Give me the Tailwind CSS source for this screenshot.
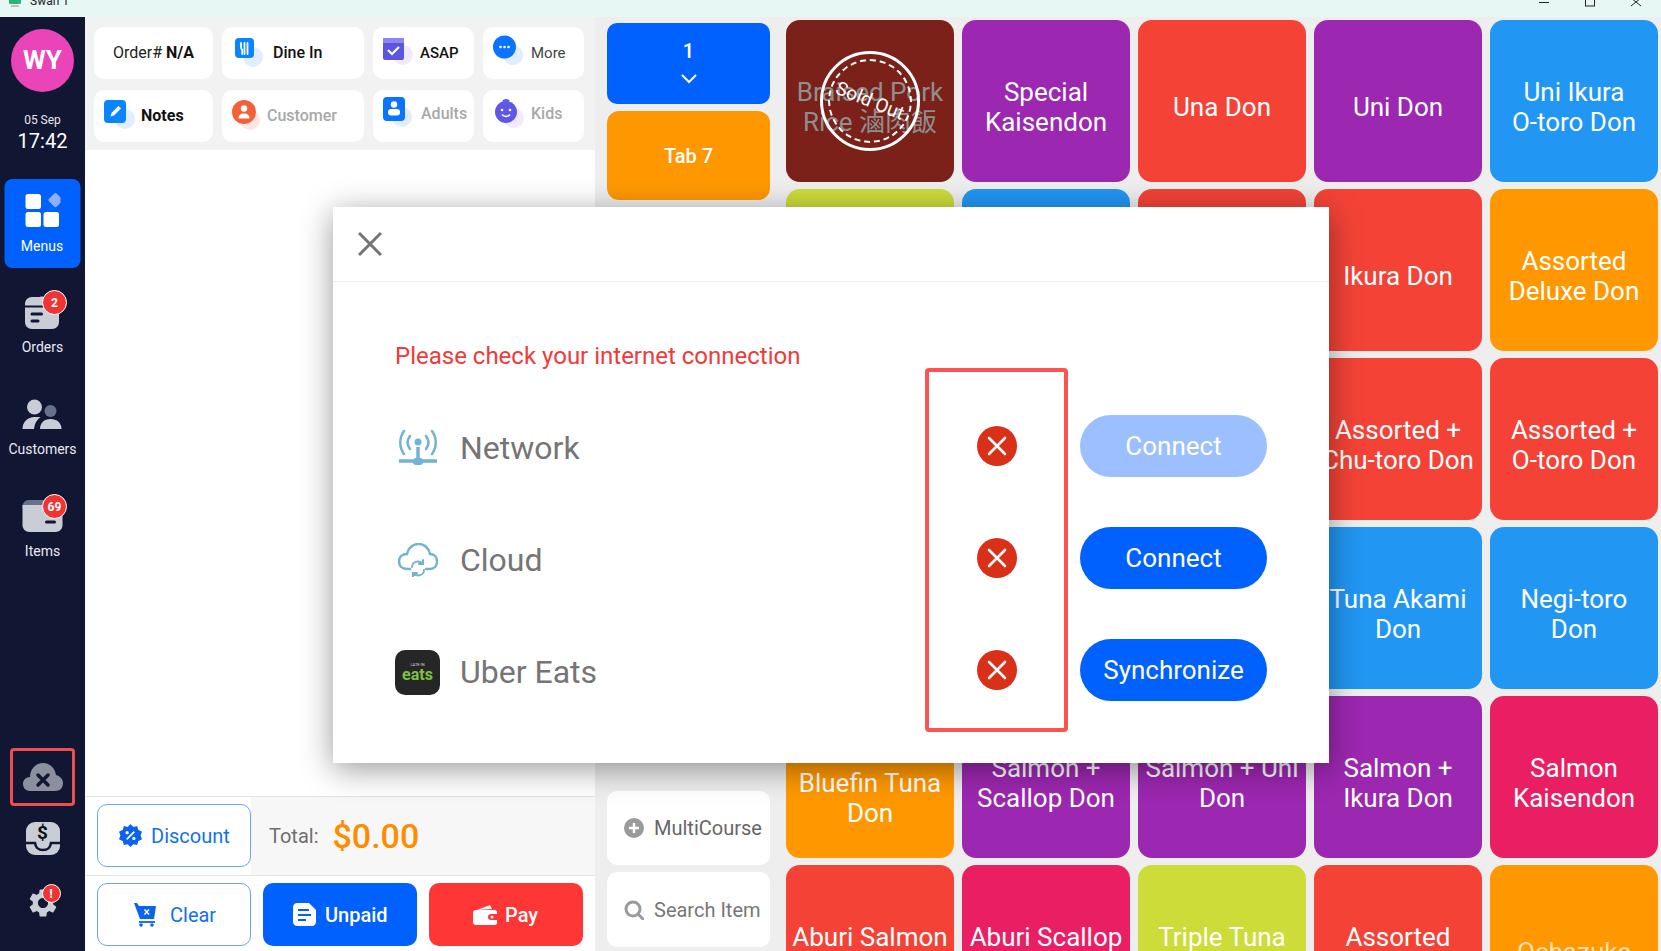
<!DOCTYPE html>
<html lang="en">
<head>
  <meta charset="UTF-8" />
  <title>Swan 1</title>
  <script src="https://cdn.jsdelivr.net/npm/@tailwindcss/browser@4"></script>
</head>
<body class="relative w-[1661px] h-[951px] overflow-hidden bg-white font-['Roboto','Noto_Sans_CJK_TC',sans-serif]">

  <!-- title bar, cut off at the top of the capture -->
  <div class="h-[17px] bg-[#e6f7f4] flex items-start justify-between overflow-hidden">
    <div class="flex items-center -mt-[6px] pl-[8px] gap-[8px]">
      <svg class="w-[14px] h-[14px]" viewBox="0 0 14 14"><rect x="1" y="1" width="12" height="9" rx="1" fill="#2fb37a"/><rect x="3" y="11" width="8" height="2" fill="#b8c4c0"/></svg>
      <span class="text-[12px] leading-[14px] text-[#222]">Swan 1</span>
    </div>
    <svg class="w-[112px] h-[8px] mr-[10px]" viewBox="0 0 112 8" fill="none" stroke="#222" stroke-width="1">
      <path d="M0 2.5H10"/><rect x="46.5" y="-4" width="9" height="10"/><path d="M92 -1L102 7M102 -1L92 7" transform="translate(0 -1)"/>
    </svg>
  </div>

  <div class="flex h-[934px]">
    <!-- sidebar -->
    <aside class="w-[85px] shrink-0 bg-[#111633] flex flex-col items-center">
      <div class="mt-[12px] w-[63px] h-[63px] rounded-full bg-[#ea44b8] flex items-center justify-center text-white font-bold text-[26px]">WY</div>
      <div class="mt-[20px] text-[12px] leading-[16px] text-[#e8e8e8]">05 Sep</div>
      <div class="text-[20px] leading-[26px] text-white">17:42</div>

      <div class="mt-[25px] w-[76px] h-[89px] -translate-x-[0.5px] rounded-[8px] bg-[#0061ff] flex flex-col items-center pt-[14px]">
        <svg class="w-[36px] h-[36px]" viewBox="0 0 36 36">
          <rect x="1" y="1" width="15.5" height="15" rx="2.5" fill="#fff"/>
          <rect x="24" y="1" width="11" height="11" rx="2" transform="rotate(45 29.5 8.5)" fill="#8cb0ff"/>
          <rect x="1" y="19" width="15.5" height="15" rx="2.5" fill="#fff"/>
          <rect x="19" y="19" width="15.5" height="15" rx="2.5" fill="#fff"/>
        </svg>
        <span class="mt-[7px] text-[14px] leading-[20px] text-white">Menus</span>
      </div>

      <div class="relative mt-[8px] h-[102px] w-[85px] flex flex-col items-center pt-[14px]">
        <svg class="w-[64px] h-[44px]" viewBox="0 0 64 44">
          <path d="M14 14c0-4 3-7 7-7h6c3 0 4-1 6 0h8c4 0 7 3 7 7v18c0 4-3 7-7 7H21c-4 0-7-3-7-7z" fill="#c9ced6"/>
          <path d="M14 16.500H48" stroke="#111633" stroke-width="2"/>
          <rect x="19.500" y="22.500" width="12.500" height="3" rx="1.500" fill="#111633"/>
          <rect x="19.500" y="29.500" width="9" height="3" rx="1.500" fill="#111633"/>
        </svg>
        <span class="mt-[3px] text-[14px] leading-[20px] text-[#e8eaf0]">Orders</span>
        <span class="absolute left-[42px] top-[14px] w-[25px] h-[25px] rounded-full bg-[#f03333] border-[1.5px] border-white text-white text-[12px] font-bold flex items-center justify-center">2</span>
      </div>

      <div class="h-[102px] w-[85px] flex flex-col items-center pt-[14px]">
        <svg class="w-[64px] h-[44px]" viewBox="0 0 64 44">
          <circle cx="39.500" cy="19" r="6" fill="#68718a"/>
          <circle cx="23.500" cy="15" r="7.500" fill="#c9ced6"/>
          <path d="M11.500 37c0-7 5-12 12-12h6c-4 3-6 7-6.500 12z" fill="#c9ced6"/>
          <path d="M29 37c0-6 4-10 10.500-10S50.500 31 50.500 37z" fill="#c9ced6"/>
        </svg>
        <span class="mt-[3px] text-[14px] leading-[20px] text-[#e8eaf0]">Customers</span>
      </div>

      <div class="relative h-[102px] w-[85px] flex flex-col items-center pt-[14px]">
        <svg class="w-[64px] h-[44px]" viewBox="0 0 64 44">
          <path d="M11.500 12c0-3 3-6 6-6h28c3 0 6 3 6 6v2h-40z" fill="#68718a"/>
          <path d="M11.500 11h40v20c0 4-3 7-7 7h-26c-4 0-7-3-7-7z" fill="#c9ced6"/>
          <rect x="34" y="26.500" width="11" height="3" rx="1.500" fill="#111633"/>
        </svg>
        <span class="mt-[3px] text-[14px] leading-[20px] text-[#e8eaf0]">Items</span>
        <span class="absolute left-[42px] top-[14px] w-[25px] h-[25px] rounded-full bg-[#f03333] border-[1.5px] border-white text-white text-[12px] font-bold flex items-center justify-center">69</span>
      </div>

      <div class="mt-auto w-[65px] h-[58px] rounded-[4px] border-[3px] border-[#f24d4d] flex items-center justify-center">
        <svg class="w-[42px] h-[30px]" viewBox="0 0 42 30">
          <path d="M8 29C3 29 1 25 1 22c0-4 3-7 7-7 0-8 6-14 13-14s12 5 13 12c4 1 7 4 7 8 0 5-3 8-8 8z" fill="#8b8f9e"/>
          <path d="M16 13l10 10M26 13L16 23" stroke="#111633" stroke-width="3.500" stroke-linecap="round"/>
        </svg>
      </div>
      <div class="mt-[16px] relative w-[34px] h-[33px] rounded-[9px] bg-[#c9ced6] overflow-hidden flex justify-center">
        <span class="text-[19px] leading-[22px] font-bold text-[#111]">$</span>
        <svg class="absolute left-0 top-0 w-[34px] h-[33px]" viewBox="0 0 34 33" fill="none"><path d="M0 21h9c1 6 4 7 8 7s7-1 8-7h9" stroke="#111633" stroke-width="2.500"/></svg>
      </div>
      <div class="relative mt-[31px] mb-[31px] w-[34px] h-[34px]">
        <svg class="w-[34px] h-[34px]" viewBox="0 0 24 24" fill="#c9ced6"><path d="M19.140 12.940c.04-.3.06-.61.06-.94 0-.32-.02-.64-.07-.94l2.030-1.580c.18-.14.23-.41.12-.61l-1.920-3.320c-.12-.22-.37-.29-.59-.22l-2.390.96c-.5-.38-1.030-.7-1.620-.94l-.36-2.540c-.04-.24-.24-.41-.48-.41h-3.840c-.24 0-.43.17-.47.41l-.36 2.540c-.59.24-1.130.57-1.620.94l-2.390-.96c-.22-.08-.47 0-.59.22L2.740 8.870c-.12.21-.08.47.12.61l2.030 1.580c-.05.3-.09.63-.09.94s.02.64.07.94l-2.030 1.580c-.18.14-.23.41-.12.61l1.920 3.320c.12.22.37.29.59.22l2.390-.96c.5.38 1.030.7 1.620.94l.36 2.540c.05.24.24.41.48.41h3.840c.24 0 .44-.17.47-.41l.36-2.540c.59-.24 1.130-.56 1.620-.94l2.390.96c.22.08.47 0 .59-.22l1.920-3.320c.12-.22.07-.47-.12-.61l-2.010-1.580zM12 15.600c-1.980 0-3.600-1.620-3.600-3.600s1.620-3.600 3.600-3.600 3.600 1.620 3.600 3.600-1.620 3.600-3.600 3.600z"/></svg>
        <span class="absolute left-[16px] -top-[2px] w-[19px] h-[19px] rounded-full bg-[#f03333] border border-white text-white text-[13px] font-bold flex items-center justify-center">!</span>
      </div>
    </aside>

    <!-- order panel -->
    <section class="w-[510px] shrink-0 flex flex-col bg-white">
      <div class="h-[133px] bg-[#f2f2f2] pt-[10px] pl-[9px] flex flex-col gap-[11px]">
        <div class="flex gap-[9px]">
          <div class="w-[119px] h-[52px] rounded-[10px] bg-white flex items-center justify-center text-[16px] text-[#222]">Order#&nbsp;<b class="font-bold text-[#111]">N/A</b></div>
          <div class="w-[142px] h-[52px] rounded-[10px] bg-white flex items-center pl-[12px] gap-[8px]">
            <svg class="w-[32px] h-[32px] -mt-[2px]" viewBox="0 0 32 32"><circle cx="19" cy="21" r="10" fill="#e1ecff"/><rect x="1" y="2" width="19" height="20" rx="4" fill="#0b84ff"/><path d="M7 7v4.500c0 1.500 1.200 2 1.200 2V18M10.500 7v11M13.500 7v11" stroke="#fff" stroke-width="1.800" stroke-linecap="round" fill="none"/></svg>
            <span class="text-[16px] font-medium text-[#111] -ml-[1px]">Dine In</span>
          </div>
          <div class="w-[101px] h-[52px] rounded-[10px] bg-white flex items-center pl-[9px] gap-[6px]">
            <svg class="w-[32px] h-[32px] -mt-[6px]" viewBox="0 0 32 32"><circle cx="21" cy="21" r="10" fill="#f3e9fd"/><rect x="1" y="4" width="21" height="22" rx="2" fill="#5b55e0"/><rect x="1" y="4" width="21" height="5" fill="#8d86f2"/><path d="M6 16l4 4 7-7" stroke="#fff" stroke-width="2.200" fill="none"/></svg>
            <span class="text-[15px] font-medium text-[#111]">ASAP</span>
          </div>
          <div class="w-[101px] h-[52px] rounded-[10px] bg-white flex items-center pl-[9px] gap-[7px]">
            <svg class="w-[32px] h-[32px] -mt-[6px]" viewBox="0 0 32 32"><circle cx="21" cy="21" r="10" fill="#e1ecff"/><circle cx="12.500" cy="13" r="11.500" fill="#0b74ff"/><circle cx="8.500" cy="13" r="1.300" fill="#fff"/><circle cx="12.500" cy="13" r="1.300" fill="#fff"/><circle cx="16.500" cy="13" r="1.300" fill="#fff"/></svg>
            <span class="text-[15px] text-[#444]">More</span>
          </div>
        </div>
        <div class="flex gap-[9px]">
          <div class="w-[119px] h-[52px] rounded-[10px] bg-white flex items-center pl-[9px] gap-[6px]">
            <svg class="w-[32px] h-[32px] -mt-[2px]" viewBox="0 0 32 32"><circle cx="22" cy="20" r="10" fill="#e1ecff"/><rect x="1" y="1" width="22" height="23" rx="4" fill="#0b84ff"/><path d="M7.500 17.500l1-3.500 7-7 2.500 2.500-7 7z" fill="#fff"/></svg>
            <span class="text-[16px] font-bold text-[#111]">Notes</span>
          </div>
          <div class="w-[142px] h-[52px] rounded-[10px] bg-white flex items-center pl-[9px] gap-[4px]">
            <svg class="w-[32px] h-[32px] -mt-[2px]" viewBox="0 0 32 32"><circle cx="19" cy="21" r="10" fill="#fde6e3"/><circle cx="13" cy="13" r="12" fill="#f4603a"/><circle cx="13" cy="9.500" r="3.200" fill="#fff"/><path d="M7.500 19.500c0-3.500 2-5 5.500-5s5.500 1.500 5.500 5z" fill="#fff"/></svg>
            <span class="text-[16px] font-medium text-[#a8a8a8]">Customer</span>
          </div>
          <div class="w-[101px] h-[52px] rounded-[10px] bg-white flex items-center pl-[9px] gap-[7px]">
            <svg class="w-[32px] h-[32px] -mt-[8px]" viewBox="0 0 32 32"><circle cx="20" cy="21" r="10" fill="#e1ecff"/><rect x="1" y="1" width="22" height="24" rx="4" fill="#0b74ff"/><circle cx="12" cy="8.500" r="3.200" fill="#fff"/><rect x="6" y="13" width="12" height="6.500" rx="3" fill="#fff"/></svg>
            <span class="text-[16px] font-medium text-[#a8a8a8] -mt-[4px]">Adults</span>
          </div>
          <div class="w-[101px] h-[52px] rounded-[10px] bg-white flex items-center pl-[11px] gap-[5px]">
            <svg class="w-[32px] h-[32px] -mt-[4px]" viewBox="0 0 32 32"><circle cx="20" cy="20" r="10" fill="#f3e9fd"/><circle cx="12" cy="14" r="11" fill="#5f57e6"/><path d="M9 3.500c1-2 5-2 6 0" stroke="#5f57e6" stroke-width="2" fill="none"/><circle cx="8" cy="12" r="1.300" fill="#fff"/><circle cx="16" cy="12" r="1.300" fill="#fff"/><path d="M8 16.500c2 2.500 6 2.500 8 0" stroke="#fff" stroke-width="1.500" fill="none"/></svg>
            <span class="text-[16px] font-medium text-[#a8a8a8] -mt-[4px]">Kids</span>
          </div>
        </div>
      </div>

      <div class="flex-1"></div>

      <div class="h-[79px] border-t border-[#e2e2e2] flex">
        <div class="w-[166px] shrink-0 pl-[12px] pt-[7px]">
          <div class="w-[154px] h-[63px] rounded-[10px] border border-[#6aa5f8] bg-white flex items-center pl-[21px] gap-[9px] text-[20px] text-[#1270f0]">
            <svg class="w-[23px] h-[23px]" viewBox="0 0 24 24"><path d="M12 0l3 3 4-1 1 4 4 2-1.500 4L24 16l-4 2-1 4-4-1-3 3-3-3-4 1-1-4-4-2 1.500-4L0 8l4-2 1-4 4 1z" fill="#0b63f0"/><path d="M8 16l8-8" stroke="#fff" stroke-width="1.800"/><circle cx="8.500" cy="9" r="1.700" fill="#fff"/><circle cx="15.500" cy="15" r="1.700" fill="#fff"/></svg>
            <span>Discount</span>
          </div>
        </div>
        <div class="flex-1 bg-[#f7f7f7] border-b border-[#e2e2e2] flex items-center pl-[18px] gap-[14px] -mb-px">
          <span class="text-[20px] text-[#6e6e6e]">Total:</span>
          <span class="text-[34px] font-medium text-[#ff8c00]">$0.00</span>
        </div>
      </div>
      <div class="h-[76px] border-t border-[#e2e2e2] pl-[12px] pt-[7px] flex gap-[12px]">
        <div class="w-[154px] h-[63px] rounded-[10px] border border-[#6aa5f8] bg-white flex items-center pl-[36px] gap-[13px] text-[20px] text-[#1270f0]">
          <svg class="w-[23px] h-[25px]" viewBox="0 0 23 25"><path d="M0 1h3l2 3h17l-2 13H6z" fill="#0b63f0"/><path d="M5 20h16" stroke="#0b63f0" stroke-width="1.800"/><circle cx="7" cy="23" r="1.800" fill="#0b63f0"/><circle cx="18" cy="23" r="1.800" fill="#0b63f0"/><path d="M10.500 7.500l4.500 5M15 7.500l-4.500 5" stroke="#fff" stroke-width="1.500"/></svg>
          <span>Clear</span>
        </div>
        <div class="w-[154px] h-[63px] rounded-[10px] bg-[#0061ff] flex items-center pl-[30px] gap-[9px] text-[20px] font-medium text-white">
          <svg class="w-[23px] h-[23px]" viewBox="0 0 23 23"><path d="M4 0h12l7 7v12c0 2-2 4-4 4H4c-2 0-4-2-4-4V4c0-2 2-4 4-4z" fill="#fff"/><path d="M5 7h11M5 12h13M5 17h8" stroke="#0061ff" stroke-width="2"/></svg>
          <span>Unpaid</span>
        </div>
        <div class="w-[154px] h-[63px] rounded-[10px] bg-[#ff3636] flex items-center pl-[44px] gap-[8px] text-[20px] font-medium text-white">
          <svg class="w-[24px] h-[22px]" viewBox="0 0 24 22"><path d="M4 6l13-5 2 4z" fill="#fff"/><path d="M3 6h19c1 0 2 1 2 2v2h-6c-2 0-3 1-3 3s1 3 3 3h6v3c0 1-1 2-2 2H3c-2 0-3-1-3-3V9c0-2 1-3 3-3z" fill="#fff"/><circle cx="19" cy="13" r="1.500" fill="#fff"/></svg>
          <span>Pay</span>
        </div>
      </div>
    </section>

    <!-- tabs and menu tiles -->
    <section class="flex-1 bg-[#eeeeee] flex overflow-hidden">
      <div class="w-[191px] shrink-0 pl-[12px] pt-[6px] flex flex-col">
        <div class="w-[163px] h-[81px] rounded-[10px] bg-[#0061ff] flex flex-col items-center pt-[16px] text-white">
          <span class="text-[20px] leading-[24px] font-medium">1</span>
          <svg class="mt-[11px] w-[16px] h-[10px]" viewBox="0 0 16 10" fill="none" stroke="#fff" stroke-width="2"><path d="M1 1l7 7 7-7"/></svg>
        </div>
        <div class="mt-[7px] w-[163px] h-[89px] rounded-[12px] bg-[#ff9800] flex items-center justify-center text-[20px] font-medium text-white">Tab 7</div>
        <div class="mt-auto w-[163px] h-[74px] rounded-[10px] bg-white flex items-center pl-[17px] gap-[10px] text-[20px] text-[#666]">
          <svg class="w-[20px] h-[20px]" viewBox="0 0 20 20"><circle cx="10" cy="10" r="10" fill="#9a9a9a"/><path d="M10 5v10M5 10h10" stroke="#fff" stroke-width="2.400"/></svg>
          <span>MultiCourse</span>
        </div>
        <div class="mt-[7px] mb-[4px] w-[163px] h-[75px] rounded-[10px] bg-white flex items-center pl-[17px] gap-[10px] text-[20px] text-[#777]">
          <svg class="w-[20px] h-[20px]" viewBox="0 0 20 20" fill="none" stroke="#9a9a9a" stroke-width="3"><circle cx="9" cy="9" r="7"/><path d="M14 14l5 5" stroke-linecap="round"/></svg>
          <span>Search Item</span>
        </div>
      </div>

      <div class="pt-[3px] grid grid-cols-[repeat(5,168px)] auto-rows-[162px] gap-x-[8px] gap-y-[7px] text-white text-[26px] leading-[30px] text-center">
        <div class="relative rounded-[14px] bg-[#7b2119] pt-[12px] flex items-center justify-center text-[#8f8f8f]">
          <span>Braised Pork<br>Rice 滷肉飯</span>
          <div class="absolute left-[34px] top-[31px] w-[100px] h-[100px] rounded-full border-[3px] border-white flex items-center justify-center">
            <div class="w-[84px] h-[84px] rounded-full border-2 border-dashed border-white flex items-center justify-center">
              <span class="rotate-[22deg] text-[19px] leading-[20px] text-white whitespace-nowrap">Sold Out</span>
            </div>
          </div>
        </div>
        <div class="rounded-[14px] bg-[#9c27b0] pt-[12px] flex items-center justify-center">Special<br>Kaisendon</div>
        <div class="rounded-[14px] bg-[#f44336] pt-[12px] flex items-center justify-center">Una Don</div>
        <div class="rounded-[14px] bg-[#9c27b0] pt-[12px] flex items-center justify-center">Uni Don</div>
        <div class="rounded-[14px] bg-[#2196f3] pt-[12px] flex items-center justify-center">Uni Ikura<br>O-toro Don</div>

        <div class="rounded-[14px] bg-[#cddc39]"></div>
        <div class="rounded-[14px] bg-[#2196f3]"></div>
        <div class="rounded-[14px] bg-[#f44336]"></div>
        <div class="rounded-[14px] bg-[#f44336] pt-[12px] flex items-center justify-center">Ikura Don</div>
        <div class="rounded-[14px] bg-[#ff9800] pt-[12px] flex items-center justify-center">Assorted<br>Deluxe Don</div>

        <div class="rounded-[14px] bg-[#f44336]"></div>
        <div class="rounded-[14px] bg-[#f44336]"></div>
        <div class="rounded-[14px] bg-[#f44336]"></div>
        <div class="rounded-[14px] bg-[#f44336] pt-[12px] flex items-center justify-center">Assorted +<br>Chu-toro Don</div>
        <div class="rounded-[14px] bg-[#f44336] pt-[12px] flex items-center justify-center">Assorted +<br>O-toro Don</div>

        <div class="rounded-[14px] bg-[#2196f3]"></div>
        <div class="rounded-[14px] bg-[#2196f3]"></div>
        <div class="rounded-[14px] bg-[#2196f3]"></div>
        <div class="rounded-[14px] bg-[#2196f3] pt-[12px] flex items-center justify-center">Tuna Akami<br>Don</div>
        <div class="rounded-[14px] bg-[#2196f3] pt-[12px] flex items-center justify-center">Negi-toro<br>Don</div>

        <div class="rounded-[14px] bg-[#ff9800] pt-[42px] flex items-center justify-center">Bluefin Tuna<br>Don</div>
        <div class="rounded-[14px] bg-[#9c27b0] pt-[12px] flex items-center justify-center">Salmon +<br>Scallop Don</div>
        <div class="rounded-[14px] bg-[#9c27b0] pt-[12px] flex items-center justify-center">Salmon + Uni<br>Don</div>
        <div class="rounded-[14px] bg-[#9c27b0] pt-[12px] flex items-center justify-center">Salmon +<br>Ikura Don</div>
        <div class="rounded-[14px] bg-[#e91e63] pt-[12px] flex items-center justify-center">Salmon<br>Kaisendon</div>

        <div class="rounded-[14px] bg-[#f44336] pt-[12px] flex items-center justify-center">Aburi Salmon<br>Don</div>
        <div class="rounded-[14px] bg-[#e91e63] pt-[12px] flex items-center justify-center">Aburi Scallop<br>Don</div>
        <div class="rounded-[14px] bg-[#cddc39] pt-[12px] flex items-center justify-center">Triple Tuna<br>Don</div>
        <div class="rounded-[14px] bg-[#f44336] pt-[12px] flex items-center justify-center">Assorted<br>Don</div>
        <div class="rounded-[14px] bg-[#ff9800] pt-[12px] flex items-center justify-center text-white/70">Ochazuke</div>
      </div>
    </section>
  </div>

  <!-- connection status dialog -->
  <div class="absolute left-[333px] top-[207px] w-[996px] h-[556px] bg-white shadow-[0_6px_30px_rgba(0,0,0,0.4)]">
    <div class="h-[75px] border-b border-[#eeeeee] flex items-center pl-[25px]">
      <svg class="w-[24px] h-[24px]" viewBox="0 0 24 24" fill="none" stroke="#757575" stroke-width="3"><path d="M1 1l22 22M23 1L1 23"/></svg>
    </div>
    <div class="flex">
      <div class="w-[592px] pl-[62px] pt-[58px]">
        <p class="text-[24px] leading-[32px] text-[#f03a3a]">Please check your internet connection</p>
        <div class="mt-[52px] h-[48px] flex items-center">
          <svg class="w-[40px] h-[38px] ml-[3px]" viewBox="0 0 40 38" fill="none" stroke="#72b3d1" stroke-width="2.500" stroke-linecap="round">
            <circle cx="20" cy="13" r="3.500" fill="#72b3d1" stroke="none"/>
            <path d="M12 7c-3 4-3 9 0 13M28 7c3 4 3 9 0 13M6 2c-5 7-5 16 0 23M34 2c5 7 5 16 0 23"/>
            <path d="M20 18v14M1 32h38" stroke-width="3.500" stroke-linecap="butt"/>
            <rect x="15" y="29" width="10" height="7" rx="3" fill="#72b3d1" stroke="none"/>
          </svg>
          <span class="ml-[22px] text-[32px] text-[#757575]">Network</span>
        </div>
        <div class="mt-[64px] h-[48px] flex items-center">
          <svg class="w-[40px] h-[34px] ml-[3px]" viewBox="0 0 40 34" fill="none" stroke="#72b3d1" stroke-width="2.500" stroke-linecap="round">
            <path d="M12 26H9C4 26 1 23 1 18.500S4 11 9 11C10 5 15 1 20.500 1S31 5 32 11c4 0 7 3 7 7.500S36 26 32 26h-4"/>
            <path d="M14 24c0-3.500 3-5.500 6-5.500 2 0 3.500 1 4.500 2M26 27c0 3.500-3 5.500-6 5.500-2 0-3.500-1-4.500-2M25 17v4h-4M15 34v-4h4" stroke-width="2"/>
          </svg>
          <span class="ml-[22px] text-[32px] text-[#757575]">Cloud</span>
        </div>
        <div class="mt-[64px] h-[48px] flex items-center">
          <div class="w-[45px] h-[45px] rounded-[10px] bg-[#262626] flex flex-col items-center justify-center">
            <span class="text-[4px] leading-[5px] text-[#ddd]">LATE IN</span>
            <span class="text-[16px] leading-[15px] font-bold text-[#7cc242]">eats</span>
          </div>
          <span class="ml-[20px] text-[32px] text-[#757575]">Uber Eats</span>
        </div>
      </div>
      <div class="mt-[86px] w-[143px] h-[364px] rounded-[4px] border-4 border-[#ff5252] flex flex-col items-center pt-[54px] gap-[72px]">
        <svg class="w-[40px] h-[40px]" viewBox="0 0 40 40"><circle cx="20" cy="20" r="20" fill="#d93018"/><path d="M12 12l16 16M28 12L12 28" stroke="#fff" stroke-width="2.600" stroke-linecap="round"/></svg>
        <svg class="w-[40px] h-[40px]" viewBox="0 0 40 40"><circle cx="20" cy="20" r="20" fill="#d93018"/><path d="M12 12l16 16M28 12L12 28" stroke="#fff" stroke-width="2.600" stroke-linecap="round"/></svg>
        <svg class="w-[40px] h-[40px]" viewBox="0 0 40 40"><circle cx="20" cy="20" r="20" fill="#d93018"/><path d="M12 12l16 16M28 12L12 28" stroke="#fff" stroke-width="2.600" stroke-linecap="round"/></svg>
      </div>
      <div class="ml-[12px] mt-[133px] flex flex-col gap-[50px] text-[26px] text-white">
        <div class="w-[187px] h-[62px] rounded-full bg-[#9bbfff] flex items-center justify-center">Connect</div>
        <div class="w-[187px] h-[62px] rounded-full bg-[#0061ff] flex items-center justify-center">Connect</div>
        <div class="w-[187px] h-[62px] rounded-full bg-[#0061ff] flex items-center justify-center">Synchronize</div>
      </div>
    </div>
  </div>
</body>
</html>
